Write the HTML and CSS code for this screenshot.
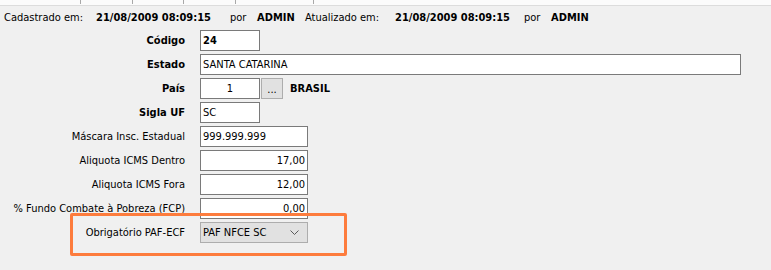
FILE: index.html
```html
<!DOCTYPE html>
<html lang="pt-BR">
<head>
<meta charset="utf-8">
<title>Estado</title>
<link rel="stylesheet" href="styles.css">
</head>
<body>
<div class="page">
  <div class="tabstrip">
    <span class="tab t1"></span><span class="tab t2"></span><span class="tab t3"></span><span class="tab t4"></span><span class="tab t5"></span>
  </div>
  <div class="info">
    <span class="lbl w-cad">Cadastrado em:</span>
    <span class="val w-date">21/08/2009 08:09:15</span>
    <span class="lbl w-por">por</span>
    <span class="val w-adm">ADMIN</span>
    <span class="lbl w-atu">Atualizado em:</span>
    <span class="val w-date2">21/08/2009 08:09:15</span>
    <span class="lbl w-por">por</span>
    <span class="val">ADMIN</span>
  </div>
  <div class="form">
    <label class="flabel bold">Código</label>
    <div class="field"><div class="input small bold">24</div></div>

    <label class="flabel bold">Estado</label>
    <div class="field"><div class="input wide">SANTA CATARINA</div></div>

    <label class="flabel bold">País</label>
    <div class="field">
      <div class="input small center">1</div>
      <div class="btn">...</div>
      <span class="country">BRASIL</span>
    </div>

    <label class="flabel bold">Sigla UF</label>
    <div class="field"><div class="input small">SC</div></div>

    <label class="flabel">Máscara Insc. Estadual</label>
    <div class="field"><div class="input medium">999.999.999</div></div>

    <label class="flabel">Aliquota ICMS Dentro</label>
    <div class="field"><div class="input medium right">17,00</div></div>

    <label class="flabel">Aliquota ICMS Fora</label>
    <div class="field"><div class="input medium right">12,00</div></div>

    <label class="flabel">% Fundo Combate à Pobreza (FCP)</label>
    <div class="field"><div class="input medium right">0,00</div></div>

    <label class="flabel">Obrigatório PAF-ECF</label>
    <div class="field">
      <div class="combo">
        <span>PAF NFCE SC</span>
        <svg class="chev" width="9" height="5" viewBox="0 0 9 5"><path d="M0.5 0.5 L4.5 4.5 L8.5 0.5" fill="none" stroke="#5a5a5a" stroke-width="1"/></svg>
      </div>
    </div>
  </div>
  <div class="highlight"></div>
</div>
</body>
</html>
```
FILE: styles.css
```css
html, body {
  margin: 0;
  padding: 0;
  background: #f0f0f0;
}
body {
  font-family: "DejaVu Sans Condensed", "Liberation Sans", sans-serif;
  font-size: 11px;
  color: #000;
}
.page {
  position: relative;
  width: 771px;
  height: 270px;
  overflow: hidden;
}
.tabstrip {
  height: 5px;
  background: #fbfbfb;
  border-bottom: 1px solid #dcdcdc;
  display: flex;
}
.tab {
  height: 4px;
  border-right: 1px solid #a8a8a8;
}
.t1 { width: 80px; }
.t2 { width: 51px; }
.t3 { width: 50px; }
.t4 { width: 51px; }
.t5 { width: 77px; }

.info {
  display: flex;
  align-items: center;
  height: 16px;
  margin-top: 3px;
  padding-left: 4px;
  white-space: nowrap;
}
.info .val { font-weight: bold; }
.w-cad { width: 92px; }
.w-date { width: 134px; }
.w-por { width: 27px; }
.w-adm { width: 48px; }
.w-atu { width: 90px; }
.w-date2 { width: 129px; }

.form {
  display: grid;
  grid-template-columns: 185px 1fr;
  column-gap: 15px;
  grid-auto-rows: 21px;
  row-gap: 3px;
  margin-top: 5px;
}
.flabel {
  text-align: right;
  align-self: center;
  white-space: nowrap;
}
.bold { font-weight: bold; }
.field {
  display: flex;
  align-items: center;
}
.input {
  box-sizing: border-box;
  height: 21px;
  background: #fff;
  border: 1px solid #7a7a7a;
  padding: 0 2px;
  line-height: 19px;
  white-space: nowrap;
}
.small { width: 60px; }
.medium { width: 108px; }
.wide { width: 541px; }
.center { text-align: center; }
.right { text-align: right; }
.btn {
  box-sizing: border-box;
  width: 22px;
  height: 21px;
  margin-left: 1px;
  background: #e1e1e1;
  border: 1px solid #adadad;
  text-align: center;
  line-height: 22px;
}
.country {
  font-weight: bold;
  margin-left: 7px;
}
.combo {
  box-sizing: border-box;
  width: 108px;
  height: 21px;
  background: #e1e1e1;
  border: 1px solid #adadad;
  padding: 0 8px 0 2px;
  display: flex;
  align-items: center;
  justify-content: space-between;
}
.chev { display: block; }

.highlight {
  position: absolute;
  left: 70px;
  top: 213px;
  width: 271px;
  height: 37px;
  border: 3px solid #fd7c3d;
  border-radius: 2px;
}
```
